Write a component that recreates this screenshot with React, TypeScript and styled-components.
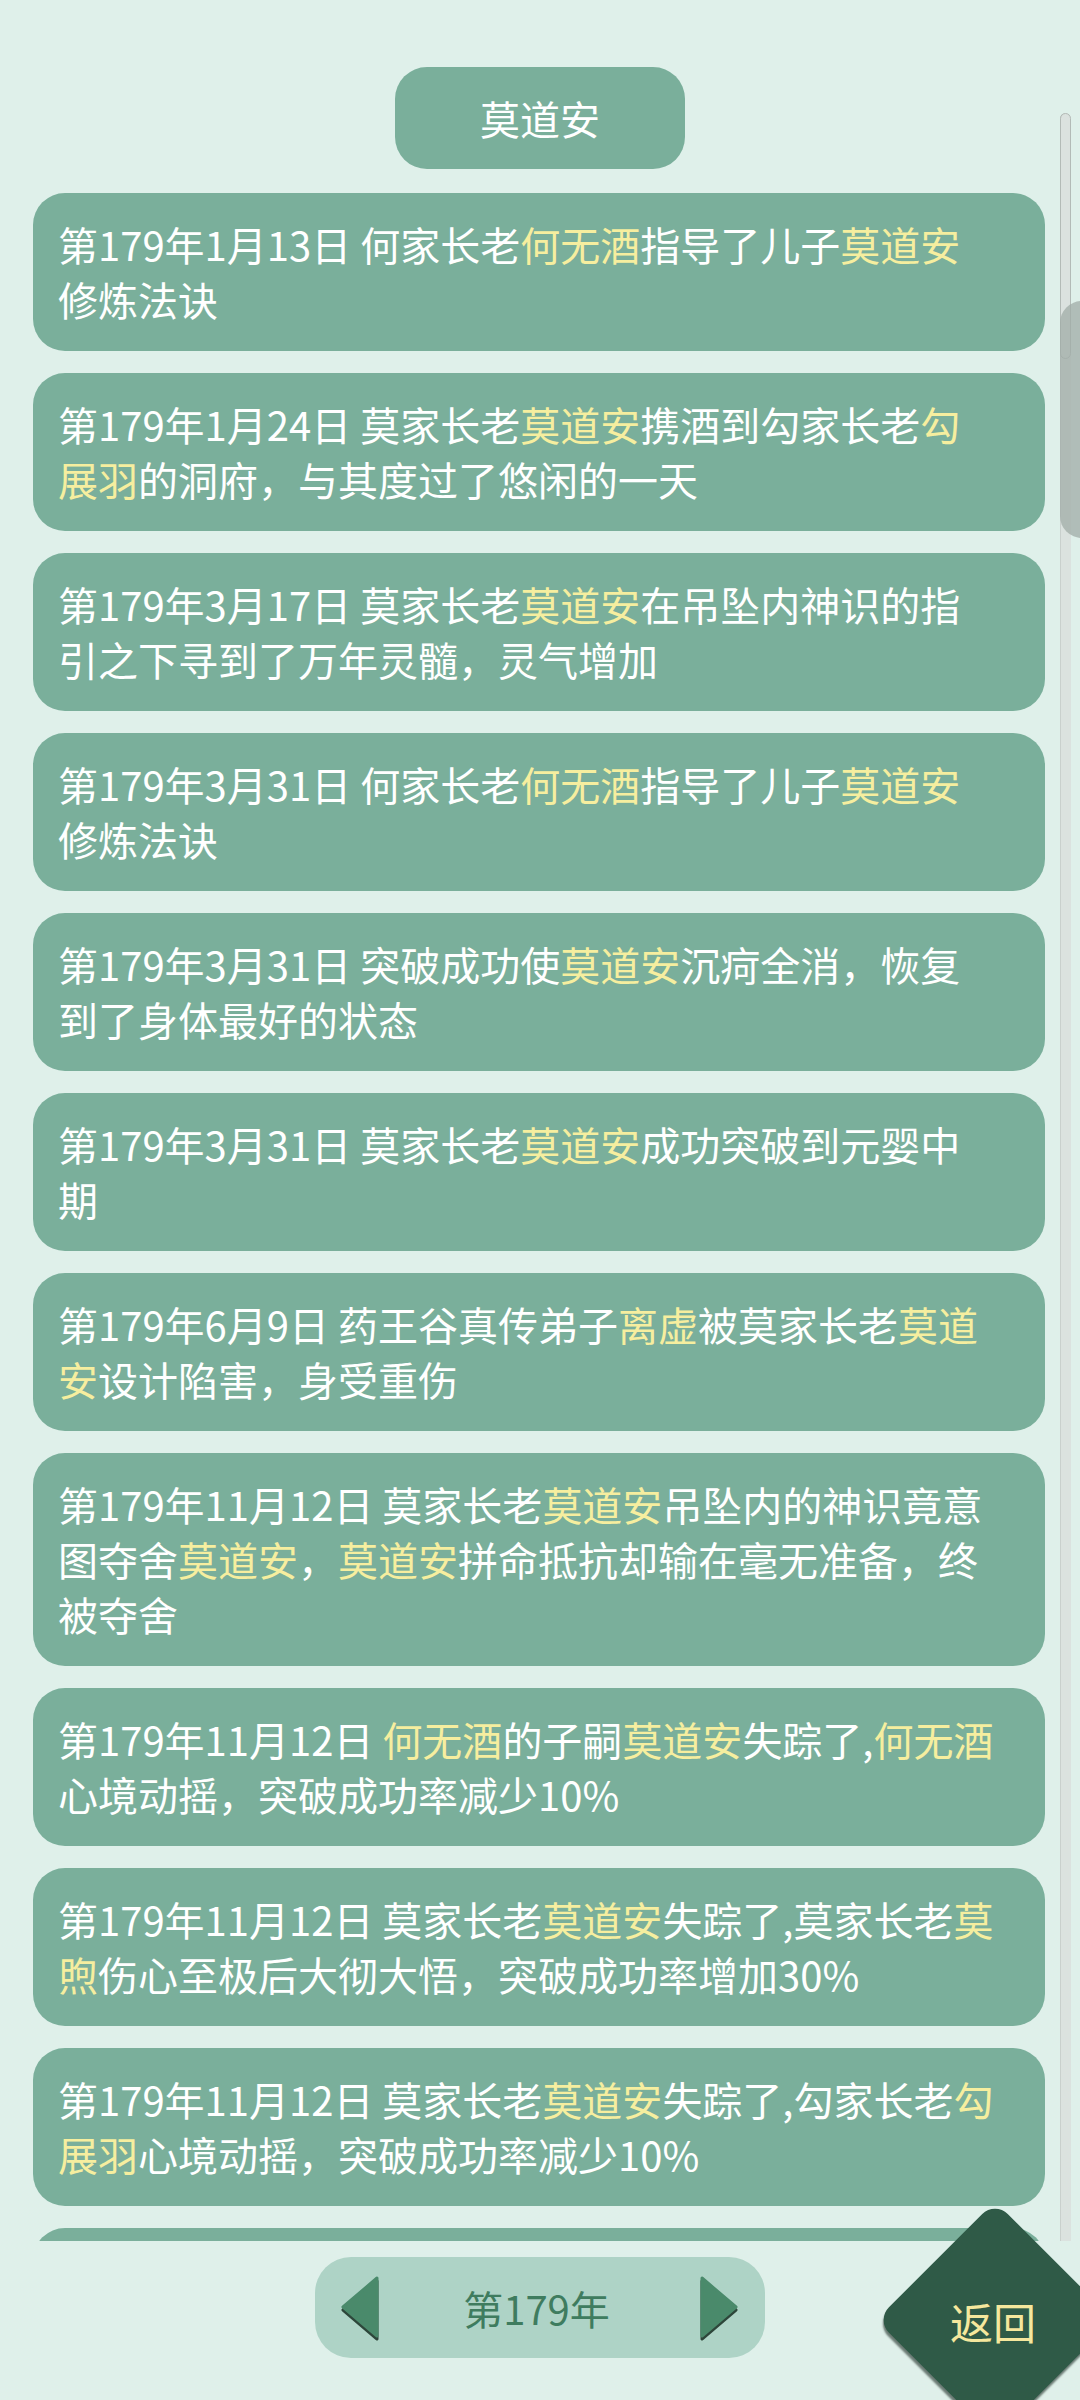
import React from "react";
import styled, { createGlobalStyle } from "styled-components";

const GlobalStyle = createGlobalStyle`
  html, body {
    margin: 0;
    padding: 0;
    background: #dff0ea;
  }
  body {
    font-family: "Noto Sans CJK SC", "Noto Sans", sans-serif;
  }
`;

const Page = styled.div`
  position: relative;
  width: 1080px;
  height: 2400px;
  overflow: hidden;
  display: flex;
  flex-direction: column;
  align-items: center;
  padding-top: 67px;
  box-sizing: border-box;
  background: #dff0ea;
`;

const TitlePill = styled.div`
  width: 290px;
  height: 102px;
  border-radius: 32px;
  background: #7aaf9b;
  color: #ffffff;
  font-size: 40px;
  display: flex;
  align-items: center;
  justify-content: center;
  flex-shrink: 0;
`;

const ListViewport = styled.div`
  width: 100%;
  height: 2048px;
  margin-top: 24px;
  overflow: hidden;
  flex-shrink: 0;
`;

const List = styled.div`
  display: flex;
  flex-direction: column;
  gap: 22px;
  padding-left: 33px;
`;

const Card = styled.div`
  width: 1012px;
  box-sizing: border-box;
  padding: 24px 50px 24px 25px;
  border-radius: 32px;
  background: #7aaf9b;
  color: #ffffff;
  font-size: 40px;
  line-height: 55px;
  word-break: break-all;
`;

const Name = styled.span`
  color: #f6ee9f;
`;

const Track = styled.div`
  position: absolute;
  left: 1060px;
  top: 113px;
  width: 11px;
  height: 2128px;
  box-sizing: border-box;
  background: #dbe2df;
  border-left: 1px solid #c9d0cd;
  border-radius: 6px 6px 0 0;
`;

const TrackCap = styled.div`
  position: absolute;
  left: 1060px;
  top: 113px;
  width: 11px;
  height: 246px;
  box-sizing: border-box;
  border: 1.5px solid #b3bbb7;
  border-radius: 6px;
`;

const Thumb = styled.div`
  position: absolute;
  left: 1060px;
  top: 301px;
  width: 30px;
  height: 237px;
  background: rgba(160, 172, 167, 0.75);
  border-radius: 22px 0 0 22px;
`;

const Pager = styled.div`
  margin-top: 16px;
  width: 450px;
  height: 101px;
  box-sizing: border-box;
  padding: 0 26px 0 25px;
  border-radius: 36px;
  background: #aed3c6;
  display: flex;
  align-items: center;
  justify-content: space-between;
  flex-shrink: 0;
`;

const PagerLabel = styled.div`
  flex: 1;
  text-align: center;
  color: #3f7c5f;
  font-size: 40px;
  margin-right: 6px;
`;

const ArrowSvg = styled.svg`
  width: 40px;
  height: 66px;
  display: block;
`;

const ReturnDiamond = styled.div`
  position: absolute;
  left: 911px;
  top: 2236px;
  width: 168px;
  height: 168px;
  background: #2f5a47;
  border-radius: 18px;
  transform: rotate(45deg);
  box-shadow: 2px 3px 2px rgba(30, 45, 38, 0.6);
`;

const ReturnLabel = styled.div`
  position: absolute;
  left: 940px;
  top: 2292px;
  width: 106px;
  text-align: center;
  color: #f5e79d;
  font-size: 43px;
  line-height: 58px;
`;

const events = [
  "第179年1月13日 何家长老[何无酒]指导了儿子[莫道安]修炼法诀",
  "第179年1月24日 莫家长老[莫道安]携酒到勾家长老[勾展羽]的洞府，与其度过了悠闲的一天",
  "第179年3月17日 莫家长老[莫道安]在吊坠内神识的指引之下寻到了万年灵髓，灵气增加",
  "第179年3月31日 何家长老[何无酒]指导了儿子[莫道安]修炼法诀",
  "第179年3月31日 突破成功使[莫道安]沉疴全消，恢复到了身体最好的状态",
  "第179年3月31日 莫家长老[莫道安]成功突破到元婴中期",
  "第179年6月9日 药王谷真传弟子[离虚]被莫家长老[莫道安]设计陷害，身受重伤",
  "第179年11月12日 莫家长老[莫道安]吊坠内的神识竟意图夺舍[莫道安]，[莫道安]拼命抵抗却输在毫无准备，终被夺舍",
  "第179年11月12日 [何无酒]的子嗣[莫道安]失踪了,[何无酒]心境动摇，突破成功率减少10%",
  "第179年11月12日 莫家长老[莫道安]失踪了,莫家长老[莫煦]伤心至极后大彻大悟，突破成功率增加30%",
  "第179年11月12日 莫家长老[莫道安]失踪了,勾家长老[勾展羽]心境动摇，突破成功率减少10%",
  "第179年11月12日 莫家长老[莫道安]失踪了,何家长老[何无酒]心境动摇，突破成功率减少10%",
];

// "[name]" marks a highlighted name
const renderEvent = (text: string) =>
  text.split(/(\[[^\]]+\])/).map((part, i) =>
    part.startsWith("[") ? (
      <Name key={i}>{part.slice(1, -1)}</Name>
    ) : (
      <React.Fragment key={i}>{part}</React.Fragment>
    )
  );

const Arrow: React.FC<{ dir: "left" | "right" }> = ({ dir }) => (
  <ArrowSvg viewBox="0 0 40 66">
    <g transform={dir === "right" ? "translate(40 0) scale(-1 1)" : undefined}>
      <polygon
        points="37,6 3,35 37,64"
        fill="#2d463a"
        stroke="#2d463a"
        strokeWidth="3"
        strokeLinejoin="round"
      />
      <polygon
        points="37,3 3,32 37,61"
        fill="#4a8a6b"
        stroke="#4a8a6b"
        strokeWidth="3"
        strokeLinejoin="round"
      />
    </g>
  </ArrowSvg>
);

export default function App() {
  return (
    <>
      <GlobalStyle />
      <Page>
        <TitlePill>莫道安</TitlePill>
        <ListViewport>
          <List>
            {events.map((e, i) => (
              <Card key={i}>{renderEvent(e)}</Card>
            ))}
          </List>
        </ListViewport>
        <Pager>
          <Arrow dir="left" />
          <PagerLabel>第179年</PagerLabel>
          <Arrow dir="right" />
        </Pager>
        <Track />
        <TrackCap />
        <Thumb />
        <ReturnDiamond />
        <ReturnLabel>返回</ReturnLabel>
      </Page>
    </>
  );
}
